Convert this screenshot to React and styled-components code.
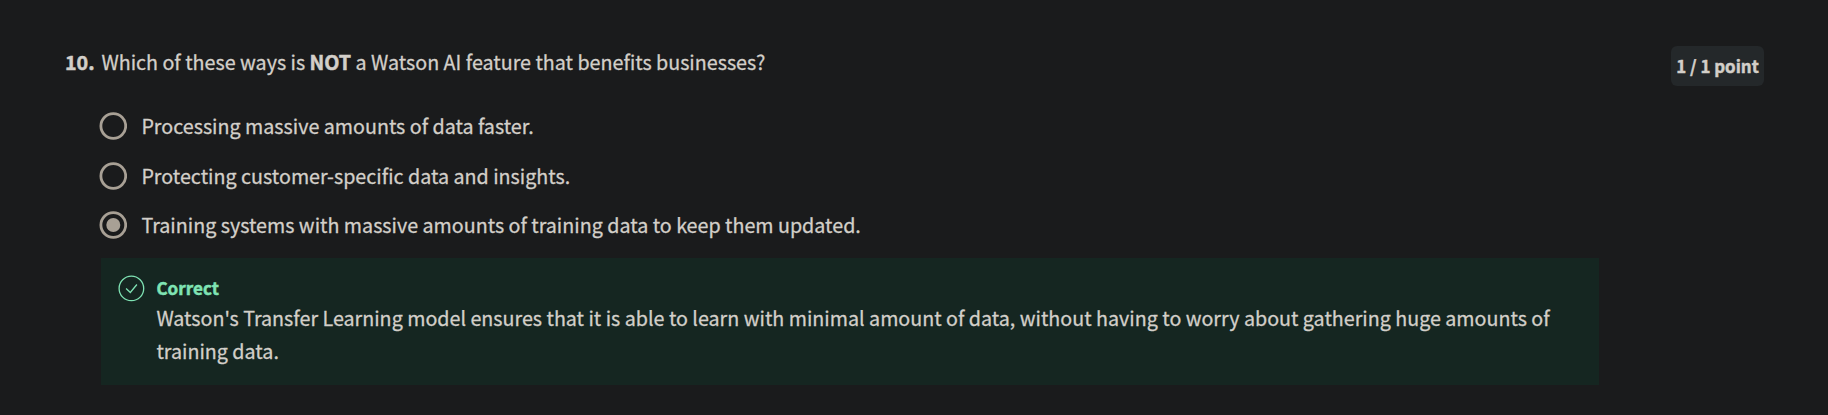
import React from 'react';
import styled, { createGlobalStyle } from 'styled-components';

const Global = createGlobalStyle`
  *{box-sizing:border-box}
  body{margin:0;background:#1a1b1c;color:#d3cfc9;font-family:"Noto Sans CJK SC",sans-serif;font-size:19.7px;line-height:33px;-webkit-text-stroke:0.28px currentColor;}
  b{-webkit-text-stroke-width:0.5px;}
`;
const Page = styled.main`height:415px;padding:45px 64px 0 65px;display:flex;align-items:flex-start;`;
const Num = styled.div`width:36px;font-weight:700;flex:none;-webkit-text-stroke-width:0.5px;`;
const Body = styled.section`width:1498px;flex:none;`;
const Prompt = styled.p`margin:0 0 31px;padding-left:0.4px;white-space:nowrap;`;
const Options = styled.div`display:grid;gap:16.5px;`;
const Option = styled.label`display:flex;align-items:center;gap:14.4px;white-space:nowrap;`;
const RadioMark = styled.svg`width:28px;height:28px;margin:1px 0 0 -2px;flex:none;`;
const Feedback = styled.div`margin-top:17px;height:127px;background:#152621;padding:15px 17px;display:flex;gap:11.4px;`;
const Icon = styled.svg`width:27px;height:27px;margin-top:2px;flex:none;`;
const Title = styled.h3`margin:0;padding-top:1px;font-size:17.1px;color:#7fe3b4;line-height:27px;height:28px;-webkit-text-stroke:0.45px #7fe3b4;`;
const Text = styled.p`margin:0;`;
const Points = styled.div`margin:1px 0 0 auto;width:93px;height:40px;border-radius:6px;background:#24282a;font-size:16.9px;font-weight:700;line-height:32px;display:grid;place-items:center;white-space:nowrap;-webkit-text-stroke-width:0.45px;`;

const options = [
  ['Processing massive amounts of data faster.', false],
  ['Protecting customer-specific data and insights.', false],
  ['Training systems with massive amounts of training data to keep them updated.', true],
];

function Radio({ checked }) {
  return (
    <RadioMark viewBox="0 0 28 28">
      <circle cx="14.3" cy="14" r="12.4" fill="none" stroke="#a8a095" strokeWidth="2.8" />
      {checked && <circle cx="14.3" cy="14" r="7" fill="#a8a095" />}
    </RadioMark>
  );
}

export default function App() {
  return (
    <><Global /><Page>
      <Num>10.</Num>
      <Body>
        <Prompt>Which of these ways is <b>NOT</b> a Watson AI feature that benefits businesses?</Prompt>
        <Options>{options.map(([t, on]) => <Option key={t}><Radio checked={on} />{t}</Option>)}</Options>
        <Feedback>
          <Icon viewBox="0 0 27 27" fill="none" stroke="#7fe3b4" strokeWidth="1.3"><circle cx="13.4" cy="13.4" r="12.3" /><path d="M8.1 13.6l4.2 3.9 6.6-8" /></Icon>
          <div><Title>Correct</Title><Text>Watson's Transfer Learning model ensures that it is able to learn with minimal amount of data, without having to worry about gathering huge amounts of training data.</Text></div>
        </Feedback>
      </Body>
      <Points>1 / 1 point</Points>
    </Page></>
  );
}
